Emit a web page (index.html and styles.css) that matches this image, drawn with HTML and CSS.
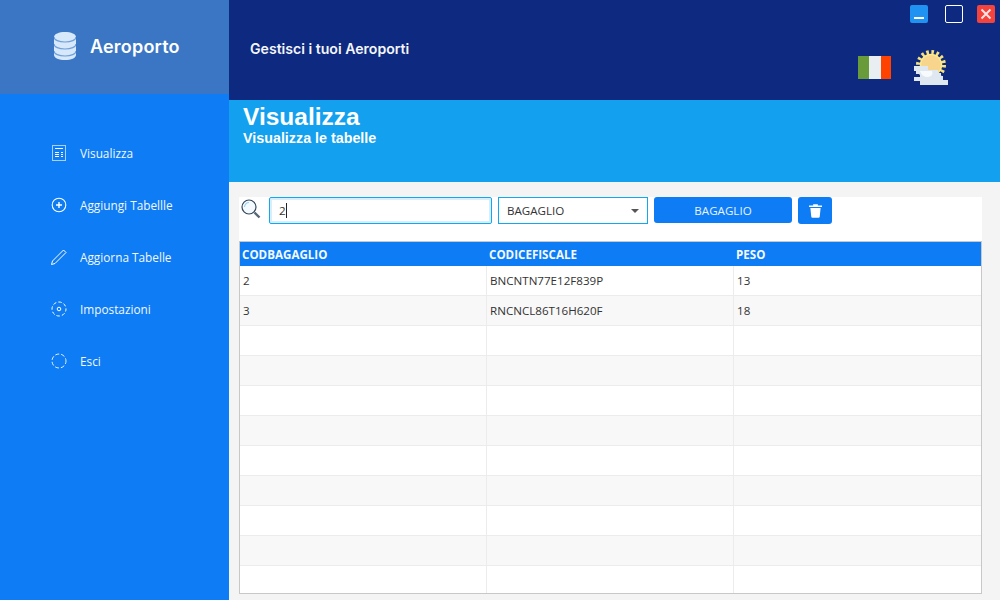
FILE: index.html
```html
<!DOCTYPE html>
<html lang="en">
  <head>
    <meta charset="UTF-8" />
    <title>Aeroporto</title>
    <link rel="stylesheet" href="styles.css">
  </head>
  <body>
    <aside class="sidebar">
      <div class="logo">
        <svg class="logo-icon" viewBox="0 0 22 28" width="22" height="28">
          <path d="M0 5C0 2 5 0 11 0s11 2 11 5v18c0 3-5 5-11 5S0 26 0 23z" fill="#d6e8fa"/>
          <path d="M0 5c0 3 5 5 11 5s11-2 11-5M0 12c0 3 5 5 11 5s11-2 11-5M0 19c0 3 5 5 11 5s11-2 11-5" fill="none" stroke="#6f9fdc" stroke-width="1.200"/>
        </svg>
        <span class="logo-text">Aeroporto</span>
      </div>
      <nav class="menu">
        <a class="menu-item">
          <svg viewBox="0 0 16 16" width="16" height="16" fill="none" stroke="#a9d0fa">
            <rect x="1.500" y="0.500" width="13" height="15"/>
            <path d="M4 3.500h8M4 7.500h4M4 9.500h4M4 11.500h4M10 7.500h2M10 9.500h2M10 11.500h2" stroke="#fff"/>
          </svg>
          <span>Visualizza</span>
        </a>
        <a class="menu-item">
          <svg viewBox="0 0 16 16" width="16" height="16" fill="none" stroke="#fff" stroke-width="1.100">
            <circle cx="8" cy="8" r="6.800"/>
            <path d="M5 8h6M8 5v6" stroke-width="1.400"/>
          </svg>
          <span>Aggiungi Tabellle</span>
        </a>
        <a class="menu-item">
          <svg viewBox="0 0 18 18" width="18" height="18" fill="none" stroke="#fff">
            <path d="M1.500 16.500l1-3.500L13.500 2l2.500 2.500L5 15.500z"/>
          </svg>
          <span>Aggiorna Tabelle</span>
        </a>
        <a class="menu-item">
          <svg viewBox="0 0 16 16" width="16" height="16" fill="none" stroke="#fff">
            <circle cx="8" cy="8" r="7" stroke-dasharray="3.500 2" stroke-dashoffset="1"/>
            <circle cx="8" cy="8" r="1.800"/>
          </svg>
          <span>Impostazioni</span>
        </a>
        <a class="menu-item">
          <svg viewBox="0 0 16 16" width="16" height="16" fill="none" stroke="#e3f0fd">
            <circle cx="8" cy="8" r="7" stroke-dasharray="4 2" stroke-dashoffset="1"/>
          </svg>
          <span>Esci</span>
        </a>
      </nav>
    </aside>

    <main class="main">
      <header class="topbar">
        <div class="window-buttons">
          <button class="win-btn win-min"><span></span></button>
          <button class="win-btn win-max"></button>
          <button class="win-btn win-close">
            <svg viewBox="0 0 12 12" width="12" height="12" stroke="#ffe3e0" stroke-width="2">
              <path d="M1.500 1.500l9 9M10.500 1.500l-9 9"/>
            </svg>
          </button>
        </div>
        <div class="topbar-row">
          <div class="tagline">Gestisci i tuoi Aeroporti</div>
          <div class="flag"><i class="green"></i><i class="white"></i><i class="red"></i></div>
          <svg class="weather" viewBox="0 0 36 36" width="36" height="36">
            <circle cx="18" cy="15" r="12.500" fill="none" stroke="#f8e27e" stroke-width="5" stroke-dasharray="2.450 2.460"/>
            <circle cx="18" cy="15" r="10.500" fill="#f7d58c" stroke="#fbe88f" stroke-width="1.500"/>
            <path d="M1 16h14v4h10v3h3v3h2v4h5v5H7v-4H1v-4h6v-3H3v-3H1z" fill="#dfe8f0"/>
            <path d="M7 21h12q2 5-4 6-6 0-8-6z" fill="#f8fbfd"/>
          </svg>
        </div>
      </header>

      <section class="page-title">
        <h1>Visualizza</h1>
        <p>Visualizza le tabelle</p>
      </section>

      <section class="content">
        <div class="panel">
          <div class="toolbar">
            <svg class="search-icon" viewBox="0 0 20 20" width="20" height="20" fill="none">
              <circle cx="8" cy="8" r="7" stroke="#33475a" stroke-width="1.200" fill="#f4fafe"/>
              <path d="M3.500 8a4.500 4.500 0 0 1 4.500-4.500" stroke="#9fd0ee" stroke-width="1.200"/>
              <path d="M13.500 13.500l5 5" stroke="#5a6874" stroke-width="2.400"/>
            </svg>
            <div class="search-box"><span>2</span><i class="caret"></i></div>
            <div class="select-box"><span>BAGAGLIO</span><i class="arrow"></i></div>
            <button class="btn-table">BAGAGLIO</button>
            <button class="btn-trash">
              <svg viewBox="0 0 14 16" width="13" height="15" fill="#fff">
                <path d="M0 2.500h14v1.800H0zM4.500 1.200h5v1.500h-5z"/>
                <path d="M1.500 5.200h11l-.9 9.300q-.1 1.300-1.400 1.300H3.800q-1.300 0-1.400-1.300z"/>
              </svg>
            </button>
          </div>

          <table class="data-table">
            <thead>
              <tr>
                <th>CODBAGAGLIO</th>
                <th>CODICEFISCALE</th>
                <th>PESO</th>
              </tr>
            </thead>
            <tbody>
              <tr><td>2</td><td>BNCNTN77E12F839P</td><td>13</td></tr>
              <tr><td>3</td><td>RNCNCL86T16H620F</td><td>18</td></tr>
              <tr><td></td><td></td><td></td></tr>
              <tr><td></td><td></td><td></td></tr>
              <tr><td></td><td></td><td></td></tr>
              <tr><td></td><td></td><td></td></tr>
              <tr><td></td><td></td><td></td></tr>
              <tr><td></td><td></td><td></td></tr>
              <tr><td></td><td></td><td></td></tr>
              <tr><td></td><td></td><td></td></tr>
              <tr><td></td><td></td><td></td></tr>
            </tbody>
          </table>
        </div>
      </section>
    </main>
  </body>
</html>
```

FILE: styles.css
```css
html,
body {
  height: 100%;
}

body {
  display: flex;
  margin: 0;
  overflow: hidden;
  font-family: "Open Sans", "Noto Sans", sans-serif;
  background: #f4f4f4;
  color: #333;
}

/* Sidebar */
.sidebar {
  width: 229px;
  height: 600px;
  flex-shrink: 0;
  background: #0e7cf4;
}

.logo {
  display: flex;
  align-items: center;
  height: 94px;
  padding-left: 54px;
  padding-bottom: 2px;
  box-sizing: border-box;
  background: #3b76c4;
}

.logo-icon {
  margin-right: 14px;
}

.logo-text {
  font-family: Inter, "Liberation Sans", sans-serif;
  font-size: 18px;
  font-weight: 600;
  letter-spacing: 0.2px;
  color: #fff;
}

.menu {
  padding-top: 33px;
}

.menu-item {
  display: flex;
  align-items: center;
  height: 52px;
  padding-left: 50px;
  font-size: 11.8px;
  color: #f2f8ff;
}

.menu-item svg {
  width: 18px;
  margin-right: 12px;
}

/* Main */
.main {
  flex: 1;
  display: flex;
  flex-direction: column;
  min-width: 0;
}

.topbar {
  height: 100px;
  box-sizing: border-box;
  padding-top: 5px;
  background: #0d2a80;
}

.window-buttons {
  display: flex;
  justify-content: flex-end;
  padding-right: 5px;
}

.win-btn {
  display: flex;
  align-items: center;
  justify-content: center;
  width: 18px;
  height: 18px;
  padding: 0;
  border: none;
  border-radius: 2px;
}

.win-min {
  align-items: flex-end;
  margin-right: 17px;
  padding-bottom: 4px;
  box-sizing: border-box;
  background: #1f92f2;
}

.win-min span {
  width: 10px;
  height: 2px;
  background: #fff;
}

.win-max {
  margin-right: 14px;
  box-sizing: border-box;
  background: none;
  border: 1px solid #fff;
}

.win-close {
  background: #f4423c;
}

.topbar-row {
  display: flex;
  align-items: flex-start;
  padding: 13px 0 0 21px;
}

.tagline {
  width: 608px;
  margin-top: 4px;
  font-family: Inter, "Liberation Sans", sans-serif;
  font-size: 14.1px;
  font-weight: 600;
  color: #f4f6fb;
}

.flag {
  display: flex;
  width: 33px;
  height: 23px;
  margin-top: 20px;
  margin-right: 22px;
}

.flag i {
  display: block;
  height: 100%;
}

.flag .green {
  width: 11px;
  background: #6a9b3a;
}

.flag .white {
  width: 12px;
  background: #e9eef2;
}

.flag .red {
  width: 10px;
  background: #ff4200;
}

.weather {
  margin-top: 14px;
}

.page-title {
  height: 82px;
  box-sizing: border-box;
  padding: 4px 0 0 14px;
  background: #12a0ef;
  font-family: "Liberation Sans", Arial, sans-serif;
  font-weight: 700;
  color: #fff;
}

.page-title h1 {
  margin: 0;
  font-size: 24.5px;
  line-height: 25px;
}

.page-title p {
  margin: 0;
  font-size: 14.3px;
  line-height: 18px;
}

/* Content */
.content {
  flex: 1;
  padding: 15px 18px 6px 10px;
}

.panel {
  height: 397px;
  box-sizing: border-box;
  background: #fff;
}

.toolbar {
  display: flex;
  align-items: flex-start;
  height: 44px;
}

.search-icon {
  margin: 2px 8px 0 2px;
}

.search-box {
  display: flex;
  align-items: center;
  width: 223px;
  height: 27px;
  box-sizing: border-box;
  margin-right: 6px;
  padding-left: 9px;
  border: 1px solid #12a7ef;
  border-radius: 2px;
  box-shadow: inset 0 0 0 2px #d8effb;
  font-size: 11.6px;
}

.caret {
  width: 1px;
  height: 15px;
  background: #222;
}

.select-box {
  display: flex;
  align-items: center;
  justify-content: space-between;
  width: 150px;
  height: 27px;
  box-sizing: border-box;
  margin-right: 6px;
  padding: 0 8px;
  border: 1px solid #12a7ef;
  font-size: 11.6px;
}

.arrow {
  width: 0;
  height: 0;
  border-left: 4px solid transparent;
  border-right: 4px solid transparent;
  border-top: 4px solid #555;
}

.btn-table {
  width: 138px;
  height: 26px;
  margin-right: 6px;
  border: none;
  border-radius: 3px;
  background: #0e7cf4;
  color: #e8f3ff;
  font-family: inherit;
  font-size: 11.6px;
}

.btn-trash {
  display: flex;
  align-items: center;
  justify-content: center;
  width: 34px;
  height: 27px;
  padding: 0;
  border: none;
  border-radius: 3px;
  background: #0e7cf4;
}

.data-table {
  width: 743px;
  table-layout: fixed;
  border-collapse: separate;
  border-spacing: 0;
  border: 1px solid #c8c8c8;
  font-size: 11.6px;
}

.data-table th {
  height: 24px;
  padding: 0 0 0 2px;
  background: #0e7cf4;
  color: #f4f9ff;
  font-weight: 700;
  text-align: left;
}

.data-table th:first-child {
  width: 245px;
}

.data-table th:nth-child(2) {
  width: 245px;
}

.data-table td {
  height: 29px;
  padding: 0 0 0 3px;
  border-right: 1px solid #ececec;
  border-bottom: 1px solid #ececec;
  background: #fff;
}

.data-table td:last-child {
  border-right: none;
}

.data-table tr:nth-child(even) td {
  background: #f8f8f8;
}

.data-table tr:last-child td {
  height: 27px;
  border-bottom: none;
}
```
